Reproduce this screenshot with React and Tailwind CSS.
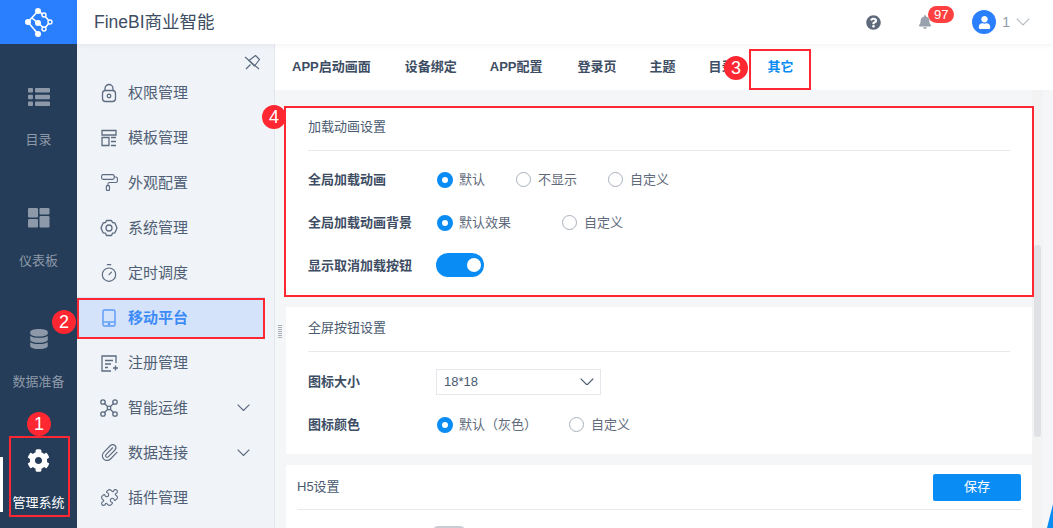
import React from "react";
import { Timer, Paperclip, Puzzle, PaintRoller } from "lucide-react";
import { FaCog, FaUser, FaBell, FaQuestionCircle, FaDatabase } from "react-icons/fa";

const Chevron = ({ w = 13, color = "#5c6b80", sw = 1.2, className = "" }) => (
  <svg width={w} height={w * 0.55} viewBox="0 0 20 11" fill="none" stroke={color} strokeWidth={sw * 20 / w} className={className}>
    <path d="M1 1l9 9 9-9" />
  </svg>
);

const PinIcon = () => (
  <svg width="17" height="17" viewBox="0 0 17 17" fill="none" stroke="#5c6b80" strokeWidth="1.2">
    <path d="M5 6.5L11.5 1.5L15.5 5.5L10.5 12Z" strokeLinejoin="round" />
    <path d="M6.5 10.5L2 15M1 3L15 15" />
  </svg>
);

const Logo = () => (
  <svg width="30" height="30" viewBox="0 0 30 30" fill="none" stroke="#fff">
    <path d="M13 4L3 15L13 27M13 16L7 11M13 16L20 22M13 4L19 8M25 15L19 8M25 15L19 22" strokeWidth="1.6" />
    <g fill="#fff" stroke="none">
      <circle cx="13" cy="4" r="3" /><circle cx="3" cy="15" r="3" /><circle cx="13" cy="16" r="3" /><circle cx="13" cy="27" r="3" />
    </g>
    <g fill="#2a7fff" strokeWidth="1.4">
      <circle cx="19" cy="8" r="2" /><circle cx="25" cy="15" r="2" /><circle cx="19" cy="22" r="2" />
    </g>
  </svg>
);

const ListIcon = () => (
  <svg width="22" height="18" viewBox="0 0 22 18" fill="#8d99a8">
    <rect x="0" y="0" width="5" height="4.5" rx="1" /><rect x="7" y="0" width="15" height="4.5" rx="1" />
    <rect x="0" y="6.7" width="5" height="4.5" rx="1" /><rect x="7" y="6.7" width="15" height="4.5" rx="1" />
    <rect x="0" y="13.4" width="5" height="4.5" rx="1" /><rect x="7" y="13.4" width="15" height="4.5" rx="1" />
  </svg>
);
const GridIcon = () => (
  <svg width="22" height="20" viewBox="0 0 22 20" fill="#8d99a8">
    <rect x="0" y="0" width="10" height="9.5" rx="1.2" /><rect x="11.5" y="0" width="10" height="6.5" rx="1.2" />
    <rect x="0" y="11" width="10" height="8.5" rx="1.2" /><rect x="11.5" y="8" width="10" height="11.5" rx="1.2" />
  </svg>
);

const s = { width: 20, height: 20, viewBox: "0 0 20 20", fill: "none", stroke: "#5c6b80", strokeWidth: 1.3 };
const LockI = () => (
  <svg {...s}><rect x="3.5" y="7.5" width="13" height="11" rx="3" /><path d="M6 7.5V5.5a4 4 0 0 1 8 0v2" /><circle cx="10" cy="13" r="1.8" /></svg>
);
const TemplateI = () => (
  <svg {...s}><path d="M3 2.5h14v4.5H3zM3 9.5h7v8H3zM12 9.5h5M12 13.5h5M12 17.5h5" /></svg>
);
const GearI = () => (
  <svg {...s}><path d="M7.5 2.5h5l1 2 2.3.3 2.2 5.2-2.2 4.9-2.3.3-1 2.3h-5l-1-2.3-2.3-.3L2 10l2.2-5.2 2.3-.3z" strokeLinejoin="round" /><circle cx="10" cy="10" r="3" /></svg>
);
const PhoneI = () => (
  <svg width="20" height="20" viewBox="0 0 20 20" fill="none" stroke="#5a9bf6" strokeWidth="1.4"><rect x="4" y="2" width="12" height="16" rx="1.5" /><path d="M4 14h12" /><circle cx="10" cy="16" r=".6" fill="#2a7fff" /></svg>
);
const RegisterI = () => (
  <svg {...s}><path d="M17 10V3H3v15h9M6 7.5h8M6 11h6M6 14.5h3M14 15h5M16.5 12.5v5" /></svg>
);
const OpsI = () => (
  <svg {...s}><path d="M5 5l10 10M15 5L5 15" /><circle cx="4" cy="4" r="2.2" /><circle cx="16" cy="4" r="2.2" /><circle cx="4" cy="16" r="2.2" /><circle cx="16" cy="16" r="2.2" /><circle cx="10" cy="10" r="1.8" fill="#f0f3f7" /></svg>
);

const menu = [
  ["权限管理", <LockI />],
  ["模板管理", <TemplateI />],
  ["外观配置", <PaintRoller size={19} stroke="#5c6b80" strokeWidth={1.4} />],
  ["系统管理", <GearI />],
  ["定时调度", <Timer size={20} stroke="#5c6b80" strokeWidth={1.4} />],
  ["移动平台", <PhoneI />, "active"],
  ["注册管理", <RegisterI />],
  ["智能运维", <OpsI />, "more"],
  ["数据连接", <Paperclip size={19} stroke="#5c6b80" strokeWidth={1.4} />, "more"],
  ["插件管理", <Puzzle size={19} stroke="#5c6b80" strokeWidth={1.4} />],
];

const Radio = ({ on, label, className = "" }) => (
  <div className={`flex items-center ${on ? "gap-[6px]" : "gap-[7px]"} ${className}`}>
    {on ? (
      <span className="w-[16px] h-[16px] rounded-full border-[5px] border-[#0a8cf5] bg-white shrink-0" />
    ) : (
      <span className="w-[15px] h-[15px] rounded-full border border-[#a9b1bd] bg-white shrink-0" />
    )}
    <span className="text-[13px] leading-[20px] text-[#5f6b7c]">{label}</span>
  </div>
);

const Row = ({ label, children, h = "h-[43px]" }) => (
  <div className={`flex items-center ${h}`}>
    <span className="w-[129px] shrink-0 text-[13px] leading-[20px] font-bold text-[#3d4d63]">{label}</span>
    {children}
  </div>
);

const CardHead = ({ title, h }) => (
  <div className={`${h} flex items-center border-b border-[#e8e9eb] text-[13px] text-[#4a5a70] pb-[3px]`}>{title}</div>
);

const Num = ({ n, className }) => (
  <span className={`absolute w-[24px] h-[24px] rounded-full bg-[#ff2832] text-white text-[18px] leading-[24px] text-center ${className}`}>{n}</span>
);

export default function App() {
  return (
    <div className="relative flex w-[1053px] h-[528px] overflow-hidden bg-[#f5f6f8] font-['Liberation_Sans','Noto_Sans_CJK_SC',sans-serif]">
      {/* rail */}
      <aside className="w-[77px] shrink-0 flex flex-col bg-[#253d59]">
        <div className="h-[44px] bg-[#2a7fff] flex items-center justify-center shrink-0 pl-[2px]"><Logo /></div>
        <nav className="relative flex flex-col pt-[41px] gap-[56px]">
          {[
            ["目录", <ListIcon />],
            ["仪表板", <GridIcon />],
            ["数据准备", <FaDatabase size={20} color="#8d99a8" />],
          ].map(([t, ic]) => (
            <div key={t} className="flex flex-col items-center h-[65px]">
              <div className="h-[24px] flex items-center justify-center">{ic}</div>
              <span className="mt-[21px] text-[13px] leading-[20px] text-[#8d99a8]">{t}</span>
            </div>
          ))}
          <div className="relative flex flex-col items-center h-[65px]">
            <span className="absolute left-0 top-[9px] w-[3px] h-[55px] bg-white" />
            <div className="h-[24px] flex items-center justify-center"><FaCog size={23} color="#fff" /></div>
            <span className="mt-[21px] text-[13px] leading-[20px] text-white">管理系统</span>
          </div>
        </nav>
      </aside>

      <div className="flex-1 flex flex-col min-w-0">
        {/* top bar */}
        <header className="relative z-10 h-[44px] shrink-0 bg-white flex items-center shadow-[0_1px_6px_rgba(0,0,0,0.06)]">
          <span className="ml-[17px] text-[17.5px] leading-[24px] text-[#3d4d63]">FineBI商业智能</span>
          <div className="ml-auto flex items-center">
            <FaQuestionCircle size={15} color="#5f6b7c" />
            <div className="relative ml-[37px] w-[14px] h-[16px] flex items-center">
              <FaBell size={14} color="#98a1ad" />
              <span className="absolute left-[10px] top-[-8px] w-[26px] h-[17px] rounded-full bg-[#ff4040] text-white text-[13px] leading-[17px] text-center">97</span>
            </div>
            <span className="ml-[40px] w-[24px] h-[24px] rounded-full bg-[#2a7fff] flex items-center justify-center"><FaUser size={13} color="#fff" /></span>
            <span className="ml-[6px] text-[14px] leading-[20px] text-[#8d99a8]">1</span>
            <Chevron w={14} color="#b5bcc6" sw={1.2} className="ml-[6px] mr-[23px]" />
          </div>
        </header>

        <div className="flex-1 flex min-h-0">
          {/* sidebar */}
          <aside className="w-[198px] shrink-0 bg-[#f0f3f7] border-r border-[#e3e6eb]">
            <div className="h-[28px] flex justify-end pt-[10px] pr-[13px]">
              <PinIcon />
            </div>
            {menu.map(([t, ic, kind]) => (
              <div
                key={t}
                className={`h-[41px] mb-[4px] w-[187px] flex items-center ${kind === "active" ? "bg-[#d5e3fa] ml-[1px] pl-[21px]" : "pl-[22px]"}`}
              >
                <span className="w-[20px] h-[20px] flex items-center justify-center shrink-0">{ic}</span>
                <span className={`ml-[9px] text-[15px] leading-[20px] ${kind === "active" ? "font-bold text-[#3d8bf7]" : "text-[#4f5f75]"}`}>{t}</span>
                {kind === "more" && <Chevron className="ml-auto mr-[14px]" />}
              </div>
            ))}
          </aside>

          {/* content */}
          <main className="flex-1 min-w-0 flex flex-col">
            <div className="h-[46px] shrink-0 bg-white flex items-center pl-[17px] gap-[34px] text-[13px] font-bold text-[#3d4d63]">
              <span>APP启动画面</span>
              <span>设备绑定</span>
              <span className="ml-[-1px]">APP配置</span>
              <span className="ml-[1px]">登录页</span>
              <span className="ml-[-1px]">主题</span>
              <span className="ml-[-1px]">目录</span>
              <span className="h-full flex items-center border-b-2 border-[#0a8cf5] text-[#0a8cf5] pl-[17px] pr-[16px] pt-[2px] ml-[-18px]">其它</span>
            </div>
            <div className="flex-1 min-h-0 flex overflow-hidden">
              <div className="relative w-[11px] shrink-0">
                <div className="absolute left-[3px] top-[234px] w-[4px] h-[14px] bg-[repeating-linear-gradient(0deg,#a7aeb8_0,#a7aeb8_1px,transparent_1px,transparent_2px)]" />
              </div>
              <div className="w-[746px] shrink-0 flex flex-col gap-[11px] pt-[17px]">
                <section className="bg-white h-[189px] px-[22px] shrink-0">
                  <CardHead title="加载动画设置" h="h-[44px]" />
                  <div className="pt-[7px]">
                    <Row label="全局加载动画">
                      <Radio on label="默认" className="w-[79px]" />
                      <Radio label="不显示" className="w-[92px]" />
                      <Radio label="自定义" />
                    </Row>
                    <Row label="全局加载动画背景">
                      <Radio on label="默认效果" className="w-[125px]" />
                      <Radio label="自定义" />
                    </Row>
                    <Row label="显示取消加载按钮">
                      <span className="ml-[-1px] mt-[-2px] w-[48px] h-[24px] rounded-full bg-[#0a8cf5] flex items-center justify-end pr-[3px]">
                        <span className="w-[14px] h-[14px] rounded-full bg-white" />
                      </span>
                    </Row>
                  </div>
                </section>
                <section className="bg-white h-[147px] px-[22px] shrink-0">
                  <CardHead title="全屏按钮设置" h="h-[45px]" />
                  <div className="pt-[8px]">
                    <Row label="图标大小">
                      <div className="ml-[-1px] w-[165px] h-[26px] border border-[#e4e7eb] flex items-center pl-[7px] pr-[6px] text-[13px] text-[#4a5a70]">
                        18*18
                        <Chevron w={14} color="#4a5a70" sw={1.2} className="ml-auto" />
                      </div>
                    </Row>
                    <Row label="图标颜色">
                      <Radio on label="默认（灰色）" className="w-[132px]" />
                      <Radio label="自定义" />
                    </Row>
                  </div>
                </section>
                <section className="bg-white px-[11px] flex-1">
                  <div className="h-[45px] flex items-center justify-between border-b border-[#e8e9eb] text-[13px] text-[#4a5a70]">
                    H5设置
                    <button className="w-[88px] h-[27px] rounded-[2px] bg-[#0a8cf5] text-white text-[13px]">保存</button>
                  </div>
                  <div className="ml-[135px] mt-[16px] w-[34px] h-[6px] rounded-t-full bg-[#c9cdd3]" />
                </section>
              </div>
              <div className="w-[11px] shrink-0 bg-[#f3f3f4] pt-[155px] px-[2px]">
                <div className="w-[7px] h-[192px] rounded-full bg-[#dfe1e5]" />
              </div>
            </div>
          </main>
        </div>
      </div>

      {/* corner */}
      <svg className="absolute right-0 bottom-0" width="6" height="24" viewBox="0 0 6 24"><path d="M6 0V24H0Z" fill="#0a8cf5" /></svg>

      {/* annotations */}
      <div className="absolute left-[9px] top-[436px] w-[61px] h-[81px] border-[2px] border-[#ff2832]" />
      <div className="absolute left-[77px] top-[298px] w-[188px] h-[41px] border-[2px] border-[#ff2832]" />
      <div className="absolute left-[749px] top-[49px] w-[62px] h-[41px] border-[2px] border-[#ff2832]" />
      <div className="absolute left-[284px] top-[106px] w-[750px] h-[191px] border-[2px] border-[#ff2832]" />
      <Num n="1" className="left-[27px] top-[412px]" />
      <Num n="2" className="left-[52px] top-[310px]" />
      <Num n="3" className="left-[724px] top-[56px]" />
      <Num n="4" className="left-[262px] top-[105px]" />
    </div>
  );
}
